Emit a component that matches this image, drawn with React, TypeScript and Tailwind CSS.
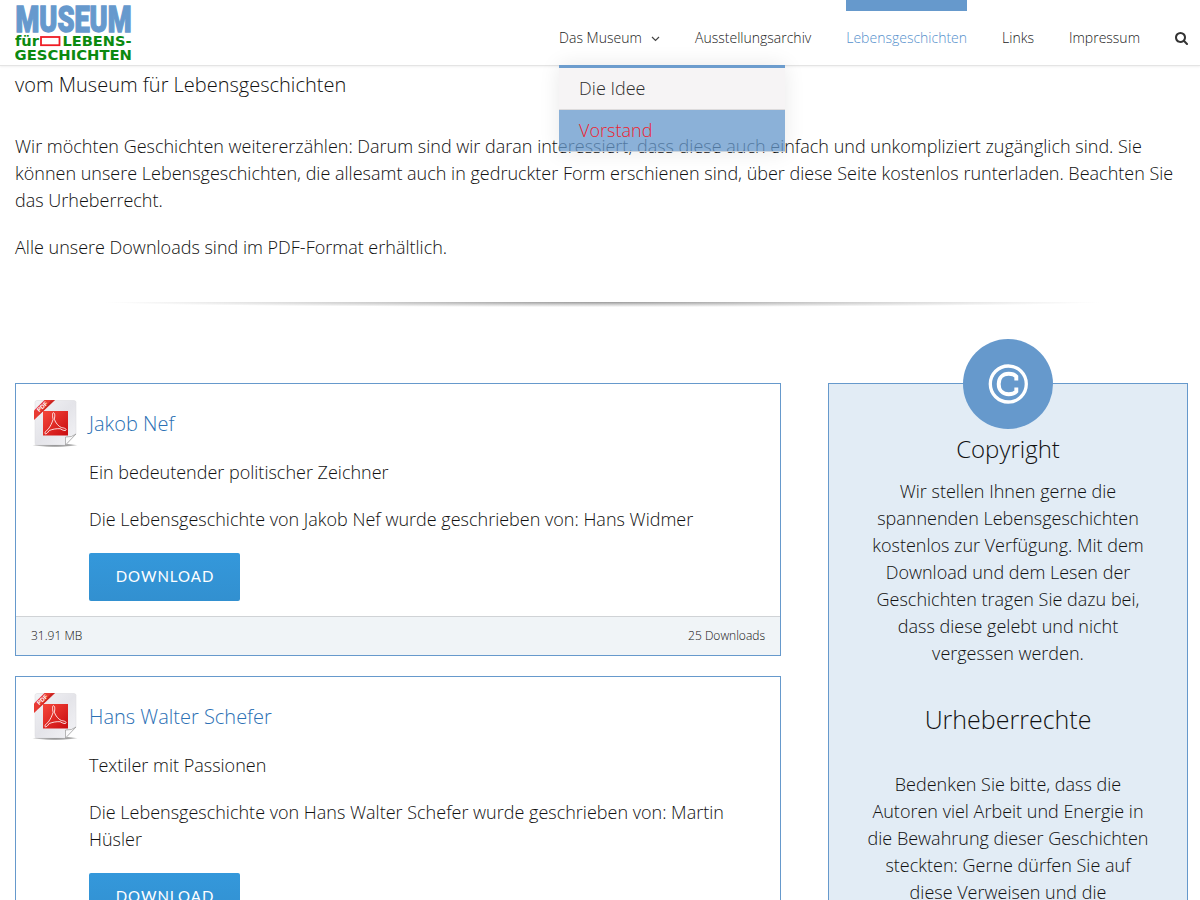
import React from "react";

const light = "font-[Open_Sans,sans-serif] font-light";

function Logo() {
  return (
    <svg className="block h-[60px] w-[120px]" viewBox="0 0 120 60" role="img" aria-label="Museum für Lebensgeschichten">
      <g transform="translate(0.5 29.300) scale(1 1.160)">
        <text x="0" y="0" textLength="116" lengthAdjust="spacingAndGlyphs" fontFamily="Roboto, sans-serif" fontWeight="900" fontSize="32" fill="#6699cd" stroke="#6699cd" strokeWidth="1.200">MUSEUM</text>
      </g>
      <g fontFamily="DejaVu Sans, sans-serif" fontWeight="700" fill="#0c8a10">
        <text x="0" y="43" fontSize="13.5" textLength="24" lengthAdjust="spacingAndGlyphs">für</text>
        <text x="47.500" y="43" fontSize="13.500" textLength="69" lengthAdjust="spacingAndGlyphs">LEBENS-</text>
        <text x="-0.500" y="56.800" fontSize="14" textLength="117.500" lengthAdjust="spacingAndGlyphs">GESCHICHTEN</text>
      </g>
      <rect x="26" y="34" width="18.500" height="8.200" fill="#fff" stroke="#ef1c24" strokeWidth="1.800" />
    </svg>
  );
}

function SearchIcon() {
  return (
    <svg className="h-[13px] w-[13px]" viewBox="0 128 1664 1664" fill="#333">
      <path d="M1152 832q0-185-131.5-316.5T704 384 387.5 515.5 256 832t131.5 316.5T704 1280t316.5-131.5T1152 832zm512 832q0 52-38 90t-90 38q-54 0-90-38l-343-342q-179 124-399 124-143 0-273.5-55.5t-225-150-150-225T0 832t55.5-273.5 150-225 225-150T704 128t273.5 55.5 225 150 150 225T1408 832q0 220-124 399l343 343q37 37 37 90z" />
    </svg>
  );
}

function PdfIcon() {
  return (
    <svg className="-mt-px block h-[50px] w-[48px]" viewBox="0 0 48 50">
      <defs>
        <linearGradient id="paper" x1="0" y1="0" x2="1" y2="1">
          <stop offset="0" stopColor="#f3f3f6" />
          <stop offset="0.5" stopColor="#e4e4e9" />
          <stop offset="1" stopColor="#f4f4f7" />
        </linearGradient>
        <linearGradient id="redbox" x1="0" y1="0" x2="1" y2="1">
          <stop offset="0" stopColor="#f5473a" />
          <stop offset="1" stopColor="#c90c10" />
        </linearGradient>
        <radialGradient id="ground">
          <stop offset="0" stopColor="#666" stopOpacity="0.9" />
          <stop offset="0.7" stopColor="#777" stopOpacity="0.6" />
          <stop offset="1" stopColor="#777" stopOpacity="0" />
        </radialGradient>
      </defs>
      <ellipse cx="24" cy="47.200" rx="23" ry="1.800" fill="url(#ground)" />
      <path d="M4 4.500q0-2 2-2h37q2 0 2 2V36L34.500 47H6q-2 0-2-2z" fill="url(#paper)" stroke="#d8d8dd" strokeWidth="0.500" />
      <path d="M45 36L34.500 47v-8q6.500.5 10.500-3z" fill="#fafafb" stroke="#999" strokeWidth="0.700" />
      <rect x="12" y="13" width="25" height="24.500" fill="url(#redbox)" />
      <path d="M22.300 14.700c1.800 0 1.700 3.500 1 6.500 1.500 4 4 7 7 8.300 3 .4 5.200 1.300 4.800 2.500s-3.300.4-6-1.300c-4-.2-7.500.5-10.800 1.800-1.600 2.200-3 3.700-4 3.300s-.1-2.500 2.800-4.500c2.300-3 4-6.500 5-10-.8-3.300-.8-6.600.2-6.600z" fill="none" stroke="#fff" strokeOpacity="0.920" strokeWidth="0.900" />
      <path d="M3 22v-9.500L13.500 2H24z" fill="#e83b33" />
      <path d="M3 22l2-2.500L24 2l-4 .5z" fill="#b51515" fillOpacity="0.600" />
      <text transform="translate(8.300 14.200) rotate(-43)" fontFamily="Liberation Sans, sans-serif" fontSize="6" fontWeight="700" fill="#fff">PDF</text>
    </svg>
  );
}

function Header() {
  return (
    <header className="absolute inset-x-0 top-0 z-10 flex h-[66px] justify-between border-b border-[#e4e4e4] bg-white pl-[15px] pr-3 shadow-[0_1px_2px_rgba(0,0,0,0.06)]">
      <div className="pt-[3px]">
        <Logo />
      </div>
      <nav className={`flex gap-[35px] text-[14px] leading-[76px] text-[#222] ${light}`}>
        <div className="relative -mr-px flex w-[102px] items-start justify-between">
          <span>Das Museum</span>
          <svg className="mr-px mt-[35px] h-2 w-[9px]" viewBox="0 0 9 8" fill="none" stroke="#444" strokeWidth="1.200">
            <path d="M1 2l3.500 3.500L8 2" />
          </svg>
          <div className="absolute left-0 top-[65px] w-[226px] border-t-[3px] border-[#6699cc] text-[18px] leading-[41px] opacity-95 shadow-[0_0_20px_rgba(0,0,0,0.09)]">
            <div className="h-[42px] border-b border-[#dcdadb] bg-[#f6f4f5] px-5">Die Idee</div>
            <div className="h-[42px] border-b border-[#c9d2dc] bg-[#6699cc]/80 px-5 text-[#ed1124]">Vorstand</div>
          </div>
        </div>
        <span>Ausstellungsarchiv</span>
        <span className="h-[66px] bg-[linear-gradient(#6699cc,#6699cc)] bg-[length:100%_11px] bg-no-repeat text-[#5590cc]">Lebensgeschichten</span>
        <span>Links</span>
        <span>Impressum</span>
        <span className="flex h-[76px] items-center"><SearchIcon /></span>
      </nav>
    </header>
  );
}

interface Story {
  name: string;
  subtitle: string;
  author: string;
}

const stories: Story[] = [
  { name: "Jakob Nef", subtitle: "Ein bedeutender politischer Zeichner", author: "Die Lebensgeschichte von Jakob Nef wurde geschrieben von: Hans Widmer" },
  { name: "Hans Walter Schefer", subtitle: "Textiler mit Passionen", author: "Die Lebensgeschichte von Hans Walter Schefer wurde geschrieben von: Martin Hüsler" },
];

function StoryCard({ name, subtitle, author }: Story) {
  return (
    <article className="border border-[#6699cc] bg-white">
      <div className="flex pb-[15px] pl-[15px] pr-[30px] pt-[15px]">
        <PdfIcon />
        <div className="ml-[10px] flex-1">
          <h3 className="pt-[10px] text-[20px] leading-[30px] text-[#2b70b4]">{name}</h3>
          <p className="mt-5 leading-[27px]">{subtitle}</p>
          <p className="mt-5 leading-[27px]">{author}</p>
          <button className="mt-5 block h-12 w-[151px] rounded-[2px] bg-linear-to-b from-[#3498db] to-[#3290d0] pb-px pl-px font-[Lato,sans-serif] text-[15px] font-normal tracking-[1px] text-white">DOWNLOAD</button>
        </div>
      </div>
      <footer className="flex h-[39px] justify-between border-t border-[#d0d3d6] bg-[#f0f4f7] px-[15px] text-[12px] leading-[38px]">
        <span>31.91 MB</span>
        <span>25 Downloads</span>
      </footer>
    </article>
  );
}

function Sidebar() {
  return (
    <aside className="h-[560px] w-[360px] border border-[#6699cc] bg-[#e2ecf5] px-[35px] text-center">
      <div className="mx-auto -mt-[45px] flex h-[90px] w-[90px] items-center justify-center rounded-full bg-[#6699cc]">
        <svg className="h-10 w-10" viewBox="0 0 40 40" fill="none" stroke="#fff">
          <circle cx="20.300" cy="20" r="18" strokeWidth="3.300" />
          <path d="M28.300 16.500v-4c-1.600-1.900-4.600-2.700-7.600-2.700-6 0-10 4-10 10.200s4 10.200 10 10.200c3 0 6-.8 7.600-2.700v-4" strokeWidth="3.900" />
        </svg>
      </div>
      <h2 className="mt-[3px] text-[24px] leading-[34px]">Copyright</h2>
      <p className="mt-3 leading-[27px]">
        Wir stellen Ihnen gerne die<br />spannenden Lebensgeschichten<br />kostenlos zur Verfügung. Mit dem<br />Download und dem Lesen der<br />Geschichten tragen Sie dazu bei,<br />dass diese gelebt und nicht<br />vergessen werden.
      </p>
      <h2 className="mt-[35px] text-[25px] leading-[34px]">Urheberrechte</h2>
      <p className="-mx-2 mt-[35px] leading-[27px]">
        Bedenken Sie bitte, dass die<br />Autoren viel Arbeit und Energie in<br />die Bewahrung dieser Geschichten<br />steckten: Gerne dürfen Sie auf<br />diese Verweisen und die
      </p>
    </aside>
  );
}

export default function App() {
  return (
    <div className={`relative h-[900px] w-[1200px] overflow-hidden bg-white text-[18px] text-[#111] ${light}`}>
      <Header />
      <main className="pl-[15px] pr-3 pt-[70px]">
        <h1 className="text-[20px] leading-[30px]">vom Museum für Lebensgeschichten</h1>
        <p className="mt-[33px] leading-[27px]">
          Wir möchten Geschichten weitererzählen: Darum sind wir daran interessiert, dass diese auch einfach und unkompliziert zugänglich sind. Sie<br />können unsere Lebensgeschichten, die allesamt auch in gedruckter Form erschienen sind, über diese Seite kostenlos runterladen. Beachten Sie<br />das Urheberrecht.
        </p>
        <p className="mt-5 leading-[27px]">Alle unsere Downloads sind im PDF-Format erhältlich.</p>
        <div className="mx-auto mt-[41px] h-[6px] w-[1000px] bg-[radial-gradient(ellipse_50%_85%_at_50%_0,#999_0%,#ccc_45%,transparent_100%)]" />
        <div className="mt-[75px] flex items-start justify-between">
          <div className="flex w-[766px] flex-col gap-5">
            {stories.map((s) => <StoryCard key={s.name} {...s} />)}
          </div>
          <Sidebar />
        </div>
      </main>
    </div>
  );
}
